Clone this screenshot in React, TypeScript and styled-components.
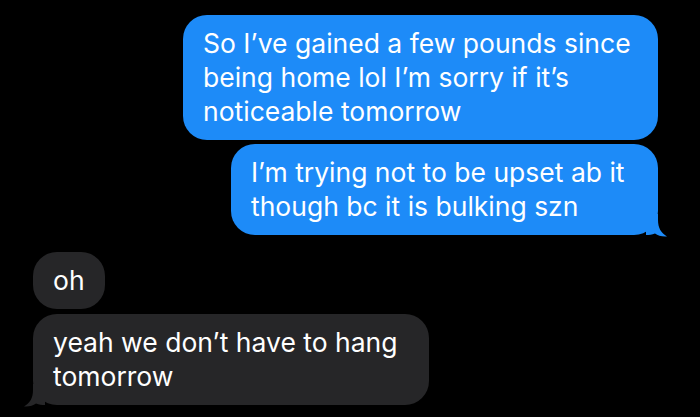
import React from "react";
import styled, { createGlobalStyle } from "styled-components";

const Global = createGlobalStyle`
  html, body {
    margin: 0;
    padding: 0;
    background: #000;
  }
  body {
    width: 700px;
    height: 417px;
    overflow: hidden;
    font-family: Inter, "Liberation Sans", Arial, sans-serif;
  }
`;

const Thread = styled.div`
  display: flex;
  flex-direction: column;
  padding: 15px 42px 0 33px;
  box-sizing: border-box;
  width: 700px;
  height: 417px;
  background: #000;
`;

const Group = styled.div<{ $side: "me" | "them"; $gap: number; $after: number }>`
  display: flex;
  flex-direction: column;
  align-items: ${(p) => (p.$side === "me" ? "flex-end" : "flex-start")};
  gap: ${(p) => p.$gap}px;
  margin-bottom: ${(p) => p.$after}px;
`;

const Bubble = styled.div<{ $side: "me" | "them"; $w: number }>`
  position: relative;
  box-sizing: border-box;
  width: ${(p) => p.$w}px;
  padding: 11px 16px 12px 20px;
  border-radius: 24px;
  background: ${(p) => (p.$side === "me" ? "#1d8bf8" : "#262628")};
  color: #fff;
  font-size: 26.5px;
  line-height: 34px;
  letter-spacing: 0;
  font-weight: 400;
`;

const Tail = styled.svg<{ $side: "me" | "them" }>`
  position: absolute;
  bottom: -2px;
  width: 21px;
  height: 23px;
  ${(p) =>
    p.$side === "me"
      ? "right: -9px;"
      : "left: -9px; transform: scaleX(-1);"}
`;

const BubbleTail = ({ side }: { side: "me" | "them" }) => (
  <Tail $side={side} viewBox="0 0 21 23">
    <path
      d="M0 21 L0 0 L12 0 L12 6 C12 14 15 19 21 22.5 C16 23 12 21.5 9 19.5 C6 21 3 21 0 21 Z"
      fill={side === "me" ? "#1d8bf8" : "#262628"}
    />
  </Tail>
);

export default function App() {
  return (
    <>
      <Global />
      <Thread>
        <Group $side="me" $gap={4} $after={17}>
          <Bubble $side="me" $w={475}>
            So I’ve gained a few pounds since being home lol I’m sorry if it’s noticeable tomorrow
          </Bubble>
          <Bubble $side="me" $w={427}>
            I’m trying not to be upset ab it though bc it is bulking szn
            <BubbleTail side="me" />
          </Bubble>
        </Group>
        <Group $side="them" $gap={5} $after={0}>
          <Bubble $side="them" $w={72}>
            oh
          </Bubble>
          <Bubble $side="them" $w={396}>
            yeah we don’t have to hang tomorrow
            <BubbleTail side="them" />
          </Bubble>
        </Group>
      </Thread>
    </>
  );
}
